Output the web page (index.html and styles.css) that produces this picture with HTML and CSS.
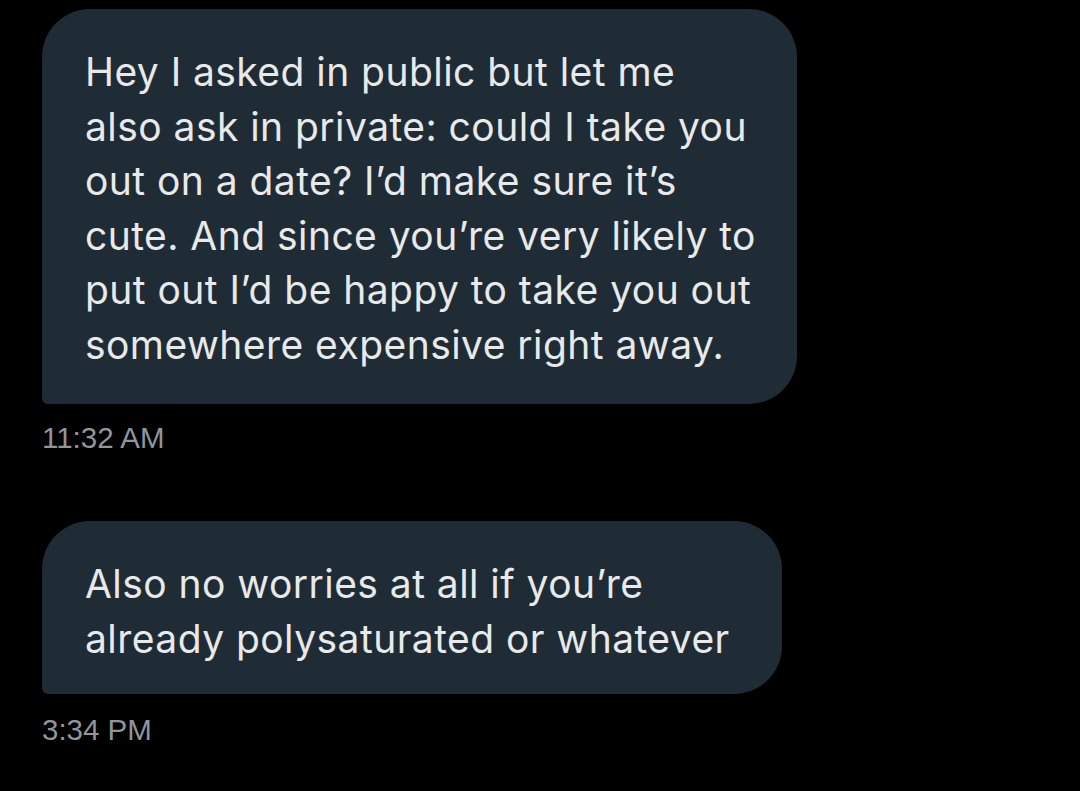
FILE: index.html
```html
<!DOCTYPE html>
<html lang="en">

<head>
    <meta charset="UTF-8">
    <meta name="viewport" content="width=device-width, initial-scale=1.0">
    <title>Messages</title>
    <link rel="stylesheet" href="styles.css">
</head>

<body>
    <div class="thread">
        <div class="message">
            <div class="bubble bubble-long">
                Hey I asked in public but let me<br>
                also ask in private: could I take you<br>
                out on a date? I’d make sure it’s<br>
                cute. And since you’re very likely to<br>
                put out I’d be happy to take you out<br>
                somewhere expensive right away.
            </div>
            <div class="time">11:32 AM</div>
        </div>

        <div class="message">
            <div class="bubble bubble-short">
                Also no worries at all if you’re<br>
                already polysaturated or whatever
            </div>
            <div class="time time-last">3:34 PM</div>
        </div>
    </div>
</body>

</html>
```

FILE: styles.css
```css
body {
    margin: 0;
    background-color: #000;
    font-family: Inter, "Noto Sans", sans-serif;
}

.thread {
    padding: 9px 0 0 42px;
    display: flex;
    flex-direction: column;
    gap: 65px;
}

.bubble {
    background-color: #202c35;
    color: #e7e9ea;
    font-size: 39px;
    letter-spacing: 0.45px;
    line-height: 54.5px;
    padding: 36px 0 32px 43px;
    border-radius: 48px 48px 48px 6px;
    box-sizing: border-box;
    white-space: nowrap;
}

.bubble-long {
    width: 755px;
}

.bubble-short {
    width: 740px;
    padding-bottom: 28px;
}

.time {
    margin-top: 16px;
    font-family: "Liberation Sans", Arial, sans-serif;
    font-size: 29.5px;
    line-height: 36px;
    color: #8f969c;
}

.time-last {
    margin-top: 18px;
}
```
